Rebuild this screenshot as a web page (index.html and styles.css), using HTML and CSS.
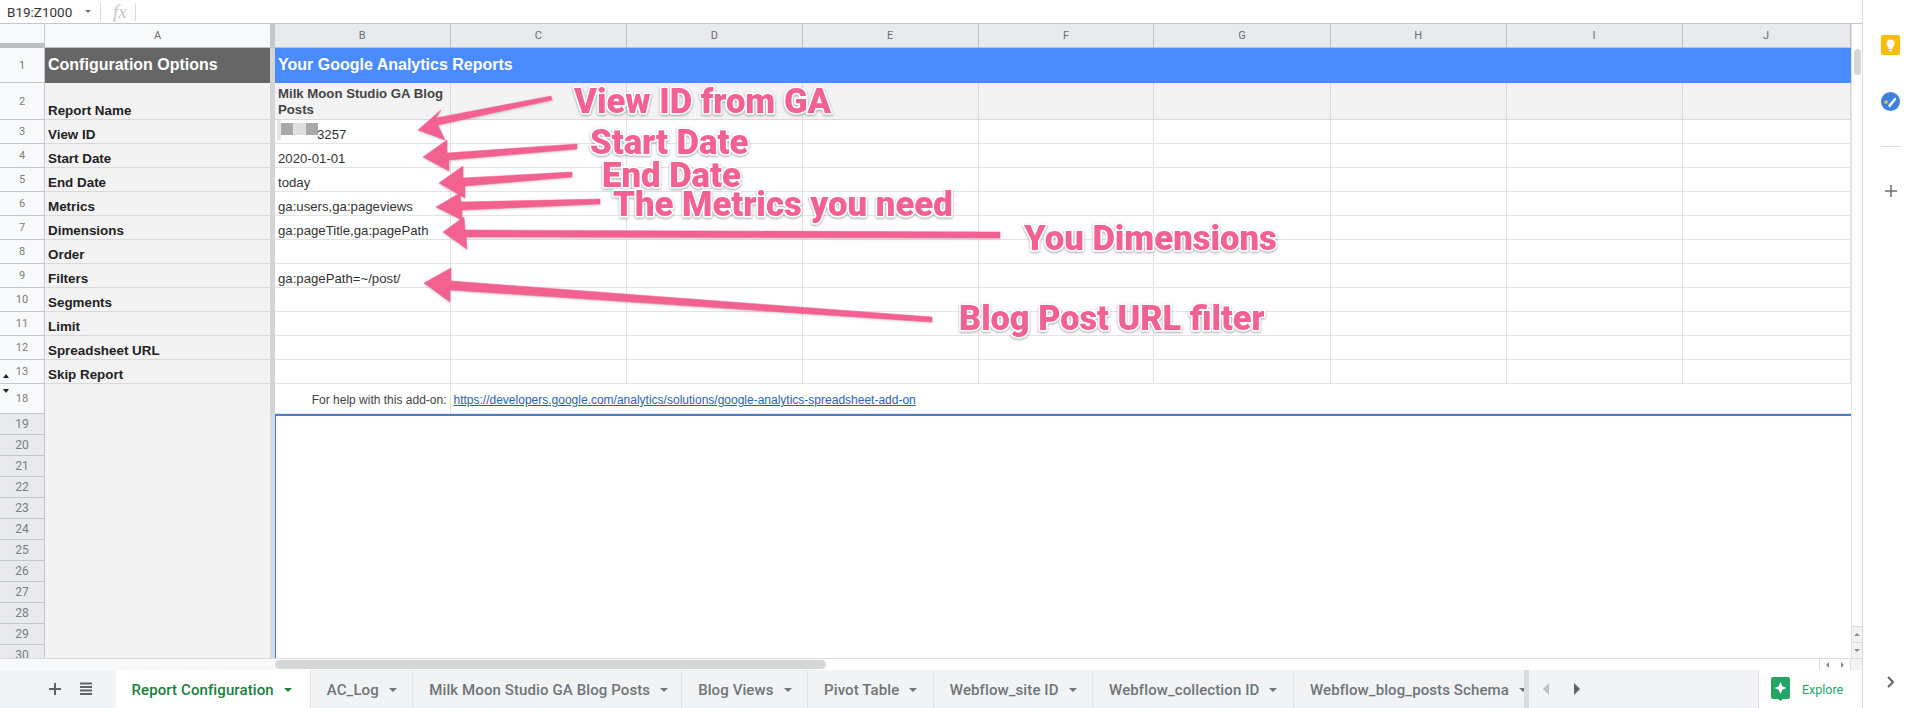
FILE: index.html
```html
<!DOCTYPE html>
<html lang="en">
<head>
    <meta charset="UTF-8">
    <title>Report Configuration - Google Sheets</title>
    <link rel="stylesheet" href="styles.css">
</head>
<body>
<div class="app">
    <div class="main">
        <div class="formula-bar">
            <span class="name-box">B19:Z1000</span>
            <span class="caret caret-small"></span>
            <span class="bar-sep"></span>
            <span class="fx">fx</span>
            <span class="bar-sep"></span>
        </div>

        <div class="sheet-area">
            <div class="sheet">
                <!-- column headers -->
                <div class="corner"></div>
                <div class="col-head col-a">A</div>
                <div class="freeze freeze-head"></div>
                <div class="col-head">B</div><div class="col-head">C</div><div class="col-head">D</div><div class="col-head">E</div><div class="col-head">F</div><div class="col-head">G</div><div class="col-head">H</div><div class="col-head">I</div><div class="col-head">J</div>

                <!-- row 1 -->
                <div class="row-head">1</div>
                <div class="cell title-a">Configuration Options</div>
                <div class="freeze"></div>
                <div class="cell title-b">Your Google Analytics Reports</div>

                <!-- row 2 -->
                <div class="row-head">2</div>
                <div class="cell label">Report Name</div>
                <div class="freeze"></div>
                <div class="cell grey wrap">Milk Moon Studio GA Blog Posts</div>
                <div class="cell grey"></div><div class="cell grey"></div><div class="cell grey"></div><div class="cell grey"></div><div class="cell grey"></div><div class="cell grey"></div><div class="cell grey"></div><div class="cell grey"></div>

                <!-- row 3 -->
                <div class="row-head">3</div>
                <div class="cell label">View ID</div>
                <div class="freeze"></div>
                <div class="cell view-id"><span class="redact"><i class="dark"></i><i class="pale"></i><i class="dark"></i></span>3257</div>
                <div class="cell"></div><div class="cell"></div><div class="cell"></div><div class="cell"></div><div class="cell"></div><div class="cell"></div><div class="cell"></div><div class="cell"></div>

                <!-- row 4 -->
                <div class="row-head">4</div>
                <div class="cell label">Start Date</div>
                <div class="freeze"></div>
                <div class="cell">2020-01-01</div>
                <div class="cell"></div><div class="cell"></div><div class="cell"></div><div class="cell"></div><div class="cell"></div><div class="cell"></div><div class="cell"></div><div class="cell"></div>

                <!-- row 5 -->
                <div class="row-head">5</div>
                <div class="cell label">End Date</div>
                <div class="freeze"></div>
                <div class="cell">today</div>
                <div class="cell"></div><div class="cell"></div><div class="cell"></div><div class="cell"></div><div class="cell"></div><div class="cell"></div><div class="cell"></div><div class="cell"></div>

                <!-- row 6 -->
                <div class="row-head">6</div>
                <div class="cell label">Metrics</div>
                <div class="freeze"></div>
                <div class="cell">ga:users,ga:pageviews</div>
                <div class="cell"></div><div class="cell"></div><div class="cell"></div><div class="cell"></div><div class="cell"></div><div class="cell"></div><div class="cell"></div><div class="cell"></div>

                <!-- row 7 -->
                <div class="row-head">7</div>
                <div class="cell label">Dimensions</div>
                <div class="freeze"></div>
                <div class="cell">ga:pageTitle,ga:pagePath</div>
                <div class="cell"></div><div class="cell"></div><div class="cell"></div><div class="cell"></div><div class="cell"></div><div class="cell"></div><div class="cell"></div><div class="cell"></div>

                <!-- row 8 -->
                <div class="row-head">8</div>
                <div class="cell label">Order</div>
                <div class="freeze"></div>
                <div class="cell"></div><div class="cell"></div><div class="cell"></div><div class="cell"></div><div class="cell"></div><div class="cell"></div><div class="cell"></div><div class="cell"></div><div class="cell"></div>

                <!-- row 9 -->
                <div class="row-head">9</div>
                <div class="cell label">Filters</div>
                <div class="freeze"></div>
                <div class="cell">ga:pagePath=~/post/</div>
                <div class="cell"></div><div class="cell"></div><div class="cell"></div><div class="cell"></div><div class="cell"></div><div class="cell"></div><div class="cell"></div><div class="cell"></div>

                <!-- row 10 -->
                <div class="row-head">10</div>
                <div class="cell label">Segments</div>
                <div class="freeze"></div>
                <div class="cell"></div><div class="cell"></div><div class="cell"></div><div class="cell"></div><div class="cell"></div><div class="cell"></div><div class="cell"></div><div class="cell"></div><div class="cell"></div>

                <!-- row 11 -->
                <div class="row-head">11</div>
                <div class="cell label">Limit</div>
                <div class="freeze"></div>
                <div class="cell"></div><div class="cell"></div><div class="cell"></div><div class="cell"></div><div class="cell"></div><div class="cell"></div><div class="cell"></div><div class="cell"></div><div class="cell"></div>

                <!-- row 12 -->
                <div class="row-head">12</div>
                <div class="cell label">Spreadsheet URL</div>
                <div class="freeze"></div>
                <div class="cell"></div><div class="cell"></div><div class="cell"></div><div class="cell"></div><div class="cell"></div><div class="cell"></div><div class="cell"></div><div class="cell"></div><div class="cell"></div>

                <!-- row 13 -->
                <div class="row-head has-hidden"><span class="hide-up"></span>13</div>
                <div class="cell label">Skip Report</div>
                <div class="freeze"></div>
                <div class="cell"></div><div class="cell"></div><div class="cell"></div><div class="cell"></div><div class="cell"></div><div class="cell"></div><div class="cell"></div><div class="cell"></div><div class="cell"></div>

                <!-- row 18 -->
                <div class="row-head has-hidden"><span class="hide-down"></span>18</div>
                <div class="cell label"></div>
                <div class="freeze"></div>
                <div class="cell help">For help with this add-on:</div>
                <div class="cell link-cell"><a href="#">https://developers.google.com/analytics/solutions/google-analytics-spreadsheet-add-on</a></div>

                <!-- rows 19 and down, selected -->
                <div class="row-head sel">19</div>
                <div class="pane-a"></div>
                <div class="freeze freeze-low"></div>
                <div class="selection"></div>
                <div class="row-head sel">20</div>
                <div class="row-head sel">21</div>
                <div class="row-head sel">22</div>
                <div class="row-head sel">23</div>
                <div class="row-head sel">24</div>
                <div class="row-head sel">25</div>
                <div class="row-head sel">26</div>
                <div class="row-head sel">27</div>
                <div class="row-head sel">28</div>
                <div class="row-head sel">29</div>
                <div class="row-head sel">30</div>

                <!-- pink notes drawn over the sheet -->
                <svg class="notes" width="1850" height="634" viewBox="0 24 1850 634">
                    <polygon class="arrow" points="551,96 552,100 438,125 445,140 418,130 441,110 436,118"/>
                    <polygon class="arrow" points="577,144 577,149 449,160 449,171 423,157 447,140 447,153"/>
                    <polygon class="arrow" points="572,172 572,177 465,186 465,198 439,183 463,166 463,178"/>
                    <polygon class="arrow" points="600,199 600,204 462,210 462,220 436,207 460,193 461,202"/>
                    <polygon class="arrow" points="1000,232 1000,238 466,237 467,249 443,232 464,217 465,230"/>
                    <polygon class="arrow" points="932,317 932,322 450,290 450,302 424,283 451,268 451,281"/>
                    <text class="note" x="574" y="113">View ID from GA</text>
                    <text class="note" x="590" y="154">Start Date</text>
                    <text class="note" x="602" y="187">End Date</text>
                    <text class="note" x="613" y="216">The Metrics you need</text>
                    <text class="note" x="1024" y="250">You Dimensions</text>
                    <text class="note note-sm" x="959" y="330">Blog Post URL filter</text>
                </svg>
            </div>

            <div class="v-scroll">
                <div class="v-thumb"></div>
                <div class="v-arrows">
                    <span class="v-btn"><i class="tri tri-up"></i></span>
                    <span class="v-btn"><i class="tri tri-down"></i></span>
                </div>
            </div>
        </div>

        <div class="h-scroll">
            <div class="h-left"></div>
            <div class="h-track"><div class="h-thumb"></div></div>
            <div class="h-arrows"><i class="tri tri-left"></i><i class="tri tri-right"></i></div>
            <div class="h-corner"></div>
        </div>

        <div class="tab-bar">
            <div class="tab-tools">
                <svg width="14" height="14" viewBox="0 0 14 14"><path d="M7 1v12M1 7h12" stroke="#5f6368" stroke-width="2"/></svg>
                <svg width="14" height="14" viewBox="0 0 14 14"><path d="M1 1.500h12M1 5h12M1 8.500h12M1 12h12" stroke="#5f6368" stroke-width="2"/></svg>
            </div>
            <div class="tab active">Report Configuration<span class="caret"></span></div>
            <div class="tab">AC_Log<span class="caret"></span></div>
            <div class="tab tab-long">Milk Moon Studio GA Blog Posts<span class="caret"></span></div>
            <div class="tab">Blog Views<span class="caret"></span></div>
            <div class="tab">Pivot Table<span class="caret"></span></div>
            <div class="tab">Webflow_site ID<span class="caret"></span></div>
            <div class="tab">Webflow_collection ID<span class="caret"></span></div>
            <div class="tab tab-last">Webflow_blog_posts Schema<span class="caret"></span></div>
            <div class="tab-nav">
                <i class="nav-left"></i>
                <i class="nav-right"></i>
            </div>
            <div class="explore">
                <svg width="19" height="24" viewBox="0 0 19 24">
                    <path d="M2 0h15a2 2 0 0 1 2 2v18a2 2 0 0 1-2 2h-5l-2.500 2-2.500-2H2a2 2 0 0 1-2-2V2a2 2 0 0 1 2-2z" fill="#23a566"/>
                    <path d="M9.500 5l1.800 4.200 4.200 1.800-4.200 1.800-1.800 4.200-1.800-4.200-4.200-1.800 4.200-1.800z" fill="#fff"/>
                </svg>
                <span>Explore</span>
            </div>
        </div>
    </div>

    <div class="side-panel">
        <svg class="keep-icon" width="19" height="20" viewBox="0 0 19 20">
            <rect width="19" height="20" rx="2" fill="#fbbc04"/>
            <circle cx="9.500" cy="8.500" r="4" fill="#fff"/>
            <rect x="7.500" y="11" width="4" height="3" fill="#fff"/>
            <rect x="8" y="14.800" width="3" height="1.500" fill="#fff"/>
        </svg>
        <svg class="tasks-icon" width="19" height="19" viewBox="0 0 19 19">
            <circle cx="9.500" cy="9.500" r="9.500" fill="#3f7fe0"/>
            <path d="M7 13.500l7-8 1.500 1.500-6.500 8.500z" fill="#fff"/>
            <circle cx="5" cy="10" r="1.800" fill="#e4c84f"/>
        </svg>
        <div class="side-divider"></div>
        <svg class="side-plus" width="12" height="12" viewBox="0 0 12 12"><path d="M6 0v12M0 6h12" stroke="#6b6e72" stroke-width="1.500"/></svg>
        <svg class="side-chevron" width="8" height="12" viewBox="0 0 8 12"><path d="M1 1l5 5-5 5" fill="none" stroke="#5f6368" stroke-width="2"/></svg>
    </div>
</div>
</body>
</html>
```

FILE: styles.css
```css
* {
    box-sizing: border-box;
}
html, body {
    margin: 0;
    height: 100%;
    overflow: hidden;
}
body {
    font-family: "Liberation Sans", Arial, sans-serif;
    background-color: #fff;
    color: #3c4043;
}
.app {
    display: flex;
    width: 1914px;
    height: 708px;
}
.main {
    width: 1863px;
    flex: none;
    display: flex;
    flex-direction: column;
    border-right: 1px solid #dadce0;
}

/* formula bar */
.formula-bar {
    height: 24px;
    flex: none;
    display: flex;
    align-items: center;
    padding-left: 7px;
    border-bottom: 1px solid #c4c7c9;
}
.name-box {
    width: 78px;
    font-family: Roboto, sans-serif;
    font-size: 13.500px;
    color: #333;
}
.caret {
    display: inline-block;
    width: 0;
    height: 0;
    margin-left: 10px;
    border-left: 4px solid transparent;
    border-right: 4px solid transparent;
    border-top: 4px solid #70757a;
}
.caret-small {
    margin-left: 0;
    border-left-width: 3px;
    border-right-width: 3px;
    border-top-width: 3px;
}
.bar-sep {
    width: 1px;
    height: 18px;
    background-color: #dadce0;
    margin-left: 9px;
}
.fx {
    width: 22px;
    margin-left: 12px;
    font-family: "Liberation Serif", serif;
    font-style: italic;
    font-size: 19px;
    color: #c4c7c9;
}
.fx + .bar-sep {
    margin-left: 0;
}

/* grid */
.sheet-area {
    height: 634px;
    flex: none;
    display: flex;
    overflow: hidden;
}
.sheet {
    position: relative;
    width: 1850.500px;
    flex: none;
    display: grid;
    grid-template-columns: 45px 225px 5px 175.500px 176.500px 175.500px 176.500px 175px 177px 175.500px 176px 168px;
    grid-template-rows: 24px 35px 37px repeat(11, 24px) 30px repeat(12, 21px);
    font-size: 13.200px;
}
.corner {
    background-color: #f8f9fa;
    border-right: 1px solid #c4c7c9;
    border-bottom: 5px solid #bdbfc1;
}
.col-head {
    display: flex;
    align-items: center;
    justify-content: center;
    font-family: Roboto, sans-serif;
    font-size: 11px;
    color: #6b6e72;
    background-color: #e8eaed;
    border-right: 1px solid #bfc1c3;
    border-bottom: 1px solid #bfc1c3;
}
.col-a {
    background-color: #f8f9fa;
    border-right: none;
}
.row-head {
    position: relative;
    grid-column: 1;
    display: flex;
    align-items: center;
    justify-content: center;
    font-family: Roboto, sans-serif;
    font-size: 11px;
    color: #7a7d80;
    background-color: #f8f9fa;
    border-right: 1px solid #c4c7c9;
    border-bottom: 1px solid #c4c7c9;
}
.row-head.sel {
    font-size: 12px;
    background-color: #e8eaed;
}
.hide-up, .hide-down {
    position: absolute;
    left: 3px;
    width: 0;
    height: 0;
    border-left: 3px solid transparent;
    border-right: 3px solid transparent;
}
.hide-up {
    bottom: 5px;
    border-bottom: 4px solid #222;
}
.hide-down {
    top: 5px;
    border-top: 4px solid #222;
}
.freeze {
    background-color: #d3d5d8;
}
.freeze-head {
    background-color: #c4c6c9;
}
.freeze-low {
    grid-row: span 12;
    background-color: #d4dbe3;
}
.cell {
    display: flex;
    align-items: flex-end;
    padding: 0 3px 1px;
    white-space: nowrap;
    color: #333;
    background-color: #fff;
    border-right: 1px solid #e2e3e3;
    border-bottom: 1px solid #e2e3e3;
}
.label {
    font-weight: bold;
    font-size: 13.400px;
    color: #222;
    background-color: #f3f3f3;
    border-right: none;
    border-bottom: 1px solid #d9d9d9;
}
.label:empty {
    border-bottom: none;
}
.title-a {
    align-items: center;
    font-size: 16px;
    font-weight: bold;
    color: #fff;
    background-color: #666;
    border: none;
}
.title-b {
    grid-column: span 9;
    align-items: center;
    font-size: 16px;
    font-weight: bold;
    color: #fff;
    background-color: #4a8cff;
    border: none;
}
.grey {
    background-color: #f3f3f3;
    border-color: #d9d9d9;
}
.wrap {
    font-weight: bold;
    white-space: normal;
    line-height: 16px;
    color: #444;
}
.view-id {
    padding-left: 2px;
}
.redact {
    display: flex;
    height: 20px;
    margin-right: -1px;
    padding-left: 4px;
    background: linear-gradient(to right, #e6e6e6 4px, transparent 4px);
    align-self: flex-start;
}
.redact i {
    display: block;
    height: 12px;
    margin-top: 3px;
}
.redact .dark {
    width: 12px;
    background-color: #a9a9a9;
}
.redact .pale {
    width: 13px;
    background-color: #e0e0e0;
}
.help {
    justify-content: flex-end;
    font-size: 12px;
    padding-bottom: 6px;
    color: #444;
}
.link-cell {
    grid-column: span 8;
    padding-bottom: 6px;
    font-size: 12px;
    border-right: none;
}
.link-cell a {
    color: #2a62b8;
}
.pane-a {
    grid-column: 2;
    grid-row: span 12;
    background-color: #f3f3f3;
}
.selection {
    grid-column: span 9;
    grid-row: span 12;
    background-color: #fff;
    border-top: 2px solid #4a7fd0;
    border-left: 1.500px solid #4a7fd0;
}
.notes {
    position: absolute;
    top: 0;
    left: 0;
    pointer-events: none;
}
.arrow {
    fill: #f2618f;
    stroke: #f2618f;
    stroke-width: 0.5;
    stroke-linejoin: round;
    filter: drop-shadow(0 1px 1px rgba(0, 0, 0, 0.2));
}
.note {
    font-family: Roboto, "Liberation Sans", sans-serif;
    font-size: 34.700px;
    font-weight: 900;
    fill: #f2618f;
    stroke: #fff;
    stroke-width: 3.500px;
    stroke-linejoin: round;
    paint-order: stroke;
    filter: drop-shadow(0 1px 1px rgba(0, 0, 0, 0.35));
}
.note-sm {
    font-size: 34.300px;
}

/* scrollbars */
.v-scroll {
    flex: 1;
    display: flex;
    flex-direction: column;
    justify-content: space-between;
    background-color: #fff;
    border-left: 1px solid #e2e3e3;
}
.v-thumb {
    width: 7px;
    height: 26px;
    margin: 25px 0 0 2px;
    border-radius: 4px;
    background-color: #d5d6d8;
}
.v-arrows {
    display: flex;
    flex-direction: column;
}
.v-btn {
    height: 16px;
    display: flex;
    align-items: center;
    justify-content: center;
    background-color: #f1f3f4;
    border-top: 1px solid #dadce0;
}
.tri {
    display: block;
    width: 0;
    height: 0;
    border: 3px solid transparent;
}
.tri-up {
    border-top: none;
    border-bottom-color: #8a8d90;
}
.tri-down {
    border-bottom: none;
    border-top-color: #8a8d90;
}
.tri-left {
    border-left: none;
    border-right-color: #8a8d90;
}
.tri-right {
    border-right: none;
    border-left-color: #8a8d90;
}
.h-scroll {
    height: 12px;
    flex: none;
    display: flex;
    border-top: 1px solid #dadce0;
}
.h-left {
    width: 275px;
    background-color: #f8f9fa;
}
.h-track {
    flex: 1;
    padding-top: 1px;
}
.h-thumb {
    width: 551px;
    height: 9px;
    border-radius: 5px;
    background-color: #d5d6d8;
}
.h-arrows {
    width: 32px;
    display: flex;
    align-items: center;
    justify-content: space-around;
    border-left: 1px solid #dadce0;
    border-right: 1px solid #dadce0;
}
.h-corner {
    width: 11.500px;
    background-color: #f1f3f4;
}

/* sheet tabs */
.tab-bar {
    flex: 1;
    display: flex;
    align-items: stretch;
    background-color: #f1f3f4;
    font-family: Roboto, sans-serif;
    font-size: 15px;
    letter-spacing: 0.1px;
    color: #70757a;
}
.tab-tools {
    width: 115.500px;
    flex: none;
    display: flex;
    align-items: center;
    padding-left: 48px;
    gap: 17px;
}
.tab {
    flex: none;
    display: flex;
    align-items: center;
    padding: 2px 15.500px 0 16px;
    white-space: nowrap;
    font-weight: 500;
    border-right: 1px solid #e4e6e8;
}
.tab.active {
    padding-right: 18px;
    background-color: #fff;
    color: #188038;
}
.tab.active .caret {
    border-top-color: #188038;
}
.tab-long {
    padding-right: 13px;
}
.tab-last {
    width: 235px;
    padding-right: 0;
    overflow: hidden;
    border-right: 5px solid #dadce0;
}
.tab-nav {
    flex: 1;
    display: flex;
    align-items: center;
    padding-left: 14px;
    gap: 25px;
}
.nav-left, .nav-right {
    display: block;
    width: 0;
    height: 0;
    border-top: 6px solid transparent;
    border-bottom: 6px solid transparent;
}
.nav-left {
    border-right: 6px solid #bdc1c6;
}
.nav-right {
    border-left: 6px solid #5f6368;
}
.explore {
    width: 104px;
    flex: none;
    display: flex;
    align-items: center;
    gap: 12px;
    padding-left: 12px;
    font-size: 12.500px;
    letter-spacing: 0;
    color: #23a566;
    background-color: #fff;
    border-left: 1px solid #dadce0;
}

/* side panel */
.side-panel {
    flex: 1;
    display: flex;
    flex-direction: column;
    align-items: center;
    padding-left: 4px;
}
.keep-icon {
    margin-top: 35px;
}
.tasks-icon {
    margin-top: 37px;
}
.side-divider {
    width: 20px;
    height: 1px;
    margin-top: 35px;
    background-color: #dadce0;
}
.side-plus {
    margin-top: 38px;
}
.side-chevron {
    margin-top: auto;
    margin-bottom: 20px;
}
```
